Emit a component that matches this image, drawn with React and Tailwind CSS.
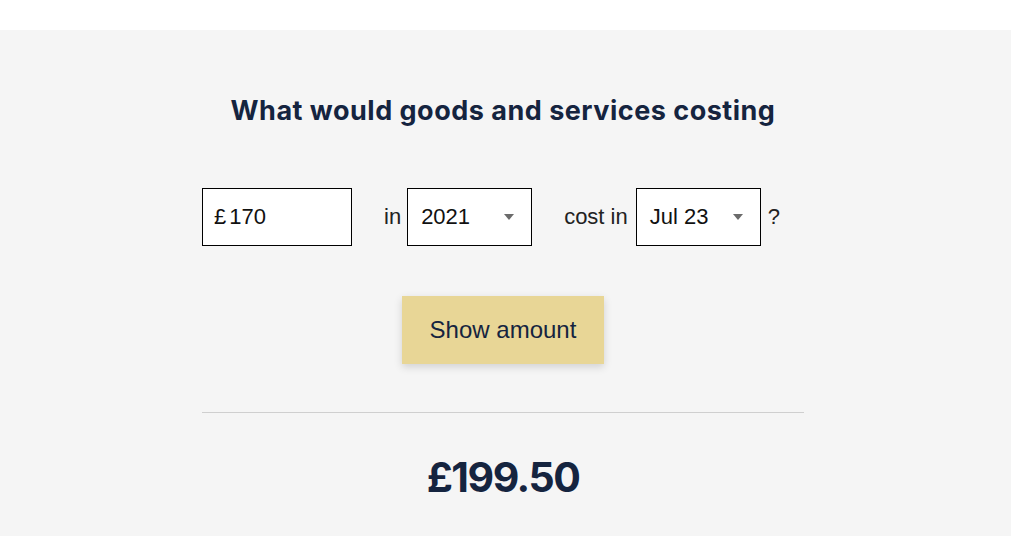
import React from 'react';

const Caret = () => (
  <svg width="10" height="6" viewBox="0 0 10 6" className="ml-auto">
    <path d="M0 0h10L5 6z" fill="#6b6b6b" />
  </svg>
);

const SelectBox = ({ value }) => (
  <div className="flex items-center w-[125px] h-[58px] border border-black bg-white pl-[13px] pr-[17px]">
    <span>{value}</span>
    <Caret />
  </div>
);

export default function App() {
  return (
    <div className="min-h-screen bg-white">
      <div className="h-[30px] bg-white" />
      <div className="bg-[#f5f5f5] h-[506px]">
        <div className="w-[602px] ml-[202px] pt-[61px]">
          <h2
            className="text-center text-[27px] font-bold text-[#15243f] tracking-[0.5px] whitespace-nowrap"
            style={{ fontFamily: 'Inter, "Noto Sans", sans-serif' }}
          >
            What would goods and services costing
          </h2>
          <div
            className="flex items-center mt-[56px] text-[22px] text-[#111]"
            style={{ fontFamily: '"Liberation Sans", Arial, sans-serif' }}
          >
            <div className="flex items-center w-[150px] h-[58px] border border-black bg-white pl-[11px]">
              <span className="mr-[3px]">£</span>
              <span>170</span>
            </div>
            <span className="ml-[32px] mr-[6px] text-[#222]">in</span>
            <SelectBox value="2021" />
            <span className="ml-[32px] mr-[8px] text-[#222]">cost in</span>
            <SelectBox value="Jul 23" />
            <span className="ml-[7px] text-[#222]">?</span>
          </div>
          <div className="flex justify-center mt-[50px]">
            <button
              className="w-[202px] h-[68px] bg-[#e8d696] text-[24px] text-[#15243f] shadow-[0_3px_8px_rgba(0,0,0,0.15)]"
              style={{ fontFamily: '"Liberation Sans", Arial, sans-serif' }}
            >
              Show amount
            </button>
          </div>
          <div className="mt-[48px] border-t border-[#cfcfcf]" />
          <div
            className="text-center mt-[44px] text-[41px] font-bold text-[#15243f] tracking-[-1.5px] leading-none"
            style={{ fontFamily: 'Inter, "Noto Sans", sans-serif' }}
          >
            £199.50
          </div>
        </div>
      </div>
    </div>
  );
}
